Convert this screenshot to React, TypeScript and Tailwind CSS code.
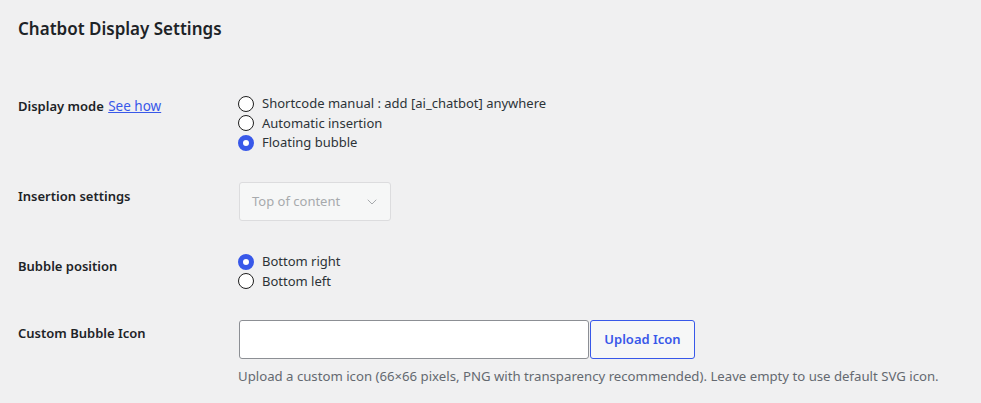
import { ChevronDown } from "lucide-react";

const font = { fontFamily: '"Noto Sans", "Open Sans", sans-serif' };

function Radio({ label, checked }: { label: string; checked?: boolean }) {
  return (
    <label className="flex items-center h-[19.5px] text-[13px] text-[#2c3338]">
      <span
        className={
          checked
            ? "w-4 h-4 rounded-full border-[5px] border-[#3858e9] bg-white shrink-0"
            : "w-4 h-4 rounded-full border-[1.5px] border-[#1e1e1e] bg-white shrink-0"
        }
      />
      <span className="ml-2">{label}</span>
    </label>
  );
}

function Row({
  label,
  pad,
  className,
  children,
}: {
  label: React.ReactNode;
  pad: string;
  className?: string;
  children: React.ReactNode;
}) {
  return (
    <div className={"flex items-start " + (className ?? "")}>
      <div className={"w-[220px] shrink-0 text-[13px] font-semibold text-[#1d2327] leading-5 " + pad}>
        {label}
      </div>
      <div>{children}</div>
    </div>
  );
}

export default function App() {
  return (
    <div className="bg-[#f0f0f1] min-h-screen w-[981px] h-[403px] pl-[18px] pt-[16px]" style={font}>
      <h2 className="text-[17px] font-semibold text-[#1d2327] leading-[26px]">Chatbot Display Settings</h2>

      <Row
        className="mt-[52px]"
        pad="pt-[2px]"
        label={
          <>
            Display mode{" "}
            <a href="#" className="text-[#3858e9] underline font-normal text-[13.5px] ml-[1px]">
              See how
            </a>
          </>
        }
      >
        <Radio label="Shortcode manual : add [ai_chatbot] anywhere" />
        <Radio label="Automatic insertion" />
        <Radio label="Floating bubble" checked />
      </Row>

      <Row className="mt-[29.5px]" pad="pt-[4px]" label="Insertion settings">
        <div className="w-[152px] h-[39px] ml-[1px] flex items-center justify-between pl-[12px] pr-[10px] bg-[#f6f7f7] border border-[#dcdcde] rounded-[3px] text-[13px] text-[#a7aaad]">
          <span>Top of content</span>
          <ChevronDown className="w-4 h-4 text-[#a7aaad]" strokeWidth={1.5} />
        </div>
      </Row>

      <Row className="mt-[31px]" pad="pt-[4px]" label="Bubble position">
        <Radio label="Bottom right" checked />
        <Radio label="Bottom left" />
      </Row>

      <Row className="mt-[29px]" pad="pt-[3px]" label="Custom Bubble Icon">
        <div className="flex ml-[1px]">
          <input
            type="text"
            className="w-[350px] h-[39px] bg-white border border-[#8c8f94] rounded-[3px] outline-none"
          />
          <button className="ml-[1px] w-[105px] h-[39px] border border-[#3858e9] rounded-[3px] bg-[#f6f7f7] text-[#3858e9] text-[13px] font-semibold">
            Upload Icon
          </button>
        </div>
        <p className="mt-[8px] text-[13.2px] leading-[18px] text-[#646970]">
          Upload a custom icon (66×66 pixels, PNG with transparency recommended). Leave empty to use default SVG icon.
        </p>
      </Row>
    </div>
  );
}
